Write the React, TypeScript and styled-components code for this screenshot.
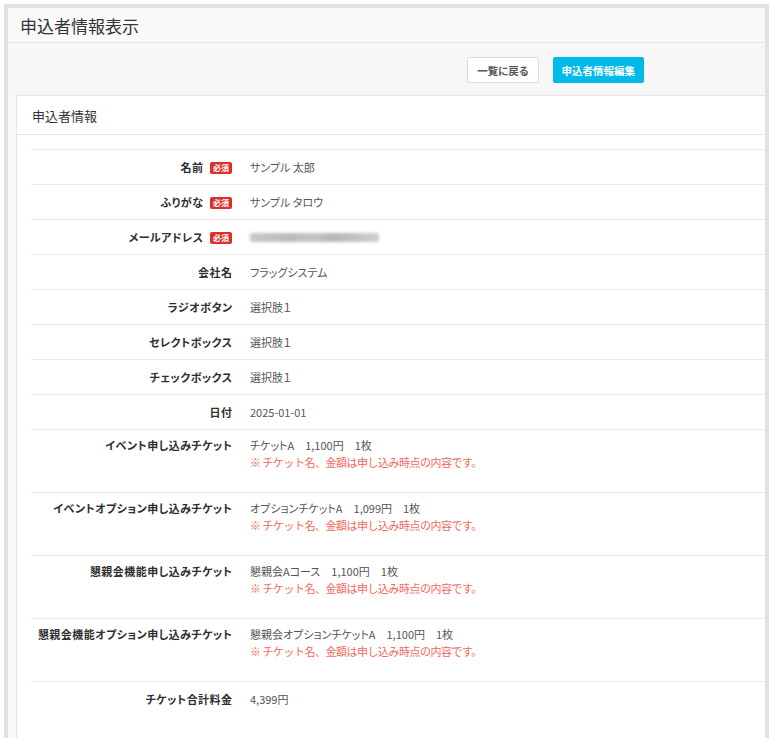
import React from "react";
import styled, { createGlobalStyle } from "styled-components";

const Global = createGlobalStyle`
  html, body { margin: 0; padding: 0; background: #fff; }
  body {
    font-family: "Noto Sans CJK JP", "Noto Sans", sans-serif;
    color: #333;
    font-feature-settings: "palt";
  }
  * { box-sizing: border-box; }
`;

const Frame = styled.div`
  margin: 4px 0 0 4px;
  width: 765px;
  height: 734px;
  border: 4px solid #e2e2e2;
  border-bottom: none;
  background: #f9f9f9;
  overflow: hidden;
  display: flex;
  flex-direction: column;
`;

const Header = styled.div`
  flex-shrink: 0;
  height: 35px;
  padding: 0 12px;
  display: flex;
  align-items: center;
  background: #f9f9f9;
  border-bottom: 1px solid #e6e6e6;
`;

const Title = styled.h1`
  margin: 0;
  font-size: 17px;
  font-weight: 400;
  color: #333;
  font-feature-settings: normal;
`;

const Toolbar = styled.div`
  flex-shrink: 0;
  height: 52px;
  display: flex;
  justify-content: flex-end;
  align-items: flex-start;
  gap: 14px;
  padding: 14px 121px 0 0;
  background: #f7f7f7;
`;

const Button = styled.button<{ $primary?: boolean }>`
  height: 26px;
  padding: 0 ${(p) => (p.$primary ? "8px" : "9px")};
  border-radius: 2px;
  font-family: inherit;
  font-size: 10.5px;
  font-weight: 700;
  font-feature-settings: "palt";
  cursor: pointer;
  border: 1px solid ${(p) => (p.$primary ? "#00b8e6" : "#dcdcdc")};
  background: ${(p) => (p.$primary ? "#00bbea" : "#fff")};
  color: ${(p) => (p.$primary ? "#fff" : "#555")};
`;

const Card = styled.div`
  margin-left: 8px;
  flex: 1 0 auto;
  background: #fff;
  border-top: 1px solid #e6e6e6;
  border-left: 1px solid #e6e6e6;
`;

const CardHeader = styled.div`
  height: 39px;
  padding: 0 15px;
  display: flex;
  align-items: center;
  border-bottom: 1px solid #e6e6e6;
  font-size: 13px;
  color: #333;
  font-feature-settings: normal;
`;

const CardBody = styled.div`
  padding: 14px 0 0 14px;
`;

const Row = styled.div`
  display: grid;
  grid-template-columns: 219px 1fr;
  border-top: 1px solid #ebebeb;
  min-height: 35px;
`;

const Label = styled.div<{ $tall?: boolean }>`
  padding: ${(p) => (p.$tall ? "8px 18px 0 0" : "10px 18px 9px 0")};
  display: flex;
  justify-content: flex-end;
  align-items: ${(p) => (p.$tall ? "flex-start" : "center")};
  gap: 7px;
  font-size: 11px;
  font-weight: 700;
  line-height: 15px;
  color: #2e2e2e;
`;

const LabelText = styled.span`
  letter-spacing: 0.45px;
  margin-right: -0.45px;
`;

const Badge = styled.span`
  display: inline-flex;
  align-items: center;
  justify-content: center;
  width: 22px;
  height: 12px;
  border-radius: 2px;
  background: #dc2f2b;
  color: #fff;
  font-size: 8px;
  font-weight: 700;
  line-height: 1;
`;

const Value = styled.div<{ $tall?: boolean }>`
  padding: ${(p) => (p.$tall ? "8px 0 22px 0" : "10px 0 9px 0")};
  display: flex;
  flex-direction: column;
  justify-content: ${(p) => (p.$tall ? "flex-start" : "center")};
  font-size: 11px;
  line-height: 15px;
  color: #555;
`;

const Note = styled.div`
  margin-top: 2px;
  color: #f36860;
  font-size: 11px;
  line-height: 15px;
  font-feature-settings: normal;
  letter-spacing: -0.5px;
`;

const Blurred = styled.div`
  width: 129px;
  height: 9px;
  background: linear-gradient(90deg, #cacaca 0%, #bababa 30%, #c4c4c4 50%, #b6b6b6 65%, #d0d0d0 100%);
  filter: blur(1.5px);
  border-radius: 2px;
`;

const BottomSpace = styled.div`
  height: 40px;
`;

type Field = {
  label: string;
  required?: boolean;
  value?: React.ReactNode;
  note?: boolean;
};

const NOTE = "※ チケット名、金額は申し込み時点の内容です。";

const fields: Field[] = [
  { label: "名前", required: true, value: "サンプル 太郎" },
  { label: "ふりがな", required: true, value: "サンプル タロウ" },
  { label: "メールアドレス", required: true, value: <Blurred /> },
  { label: "会社名", value: "フラッグシステム" },
  { label: "ラジオボタン", value: "選択肢１" },
  { label: "セレクトボックス", value: "選択肢１" },
  { label: "チェックボックス", value: "選択肢１" },
  { label: "日付", value: "2025-01-01" },
  { label: "イベント申し込みチケット", value: "チケットA　1,100円　1枚", note: true },
  { label: "イベントオプション申し込みチケット", value: "オプションチケットA　1,099円　1枚", note: true },
  { label: "懇親会機能申し込みチケット", value: "懇親会Aコース　1,100円　1枚", note: true },
  { label: "懇親会機能オプション申し込みチケット", value: "懇親会オプションチケットA　1,100円　1枚", note: true },
  { label: "チケット合計料金", value: "4,399円" },
];

export default function App() {
  return (
    <>
      <Global />
      <Frame>
        <Header>
          <Title>申込者情報表示</Title>
        </Header>
        <Toolbar>
          <Button>一覧に戻る</Button>
          <Button $primary>申込者情報編集</Button>
        </Toolbar>
        <Card>
          <CardHeader>申込者情報</CardHeader>
          <CardBody>
            {fields.map((f) => (
              <Row key={f.label}>
                <Label $tall={f.note}>
                  <LabelText>{f.label}</LabelText>
                  {f.required && <Badge>必須</Badge>}
                </Label>
                <Value $tall={f.note}>
                  <div>{f.value}</div>
                  {f.note && <Note>{NOTE}</Note>}
                </Value>
              </Row>
            ))}
            <BottomSpace />
          </CardBody>
        </Card>
      </Frame>
    </>
  );
}
